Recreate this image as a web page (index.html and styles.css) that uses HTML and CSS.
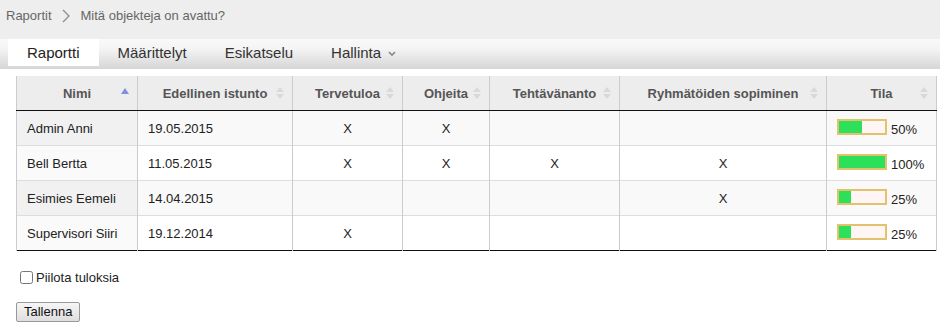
FILE: index.html
```html
<!DOCTYPE html>
<html>
<head>
    <title>Mitä objekteja on avattu?</title>
    <link rel="stylesheet" href="styles.css">
</head>
<body>
    <div class="breadcrumb">
        <a href="#">Raportit</a>
        <svg class="crumb-sep" width="8" height="14" viewBox="0 0 8 14"><path d="M1 1 L7 7 L1 13" fill="none" stroke="#888" stroke-width="1.2"/></svg>
        <span>Mitä objekteja on avattu?</span>
    </div>
    <div class="tabs">
        <a class="tab active" href="#">Raportti</a>
        <a class="tab" href="#">Määrittelyt</a>
        <a class="tab" href="#">Esikatselu</a>
        <a class="tab" href="#">Hallinta <svg class="caret" width="8" height="6" viewBox="0 0 8 6"><path d="M1 1 L4 4 L7 1" fill="none" stroke="#888" stroke-width="1.6"/></svg></a>
    </div>

    <div class="content">
        <table class="report">
            <colgroup>
                <col style="width:121px"><col style="width:155px"><col style="width:110px"><col style="width:87px"><col style="width:130px"><col style="width:207px"><col style="width:110px">
            </colgroup>
            <thead>
                <tr>
                    <th class="sort-asc">Nimi</th>
                    <th class="sortable">Edellinen istunto</th>
                    <th class="sortable">Tervetuloa</th>
                    <th class="sortable">Ohjeita</th>
                    <th class="sortable">Tehtävänanto</th>
                    <th class="sortable">Ryhmätöiden sopiminen</th>
                    <th class="sortable">Tila</th>
                </tr>
            </thead>
            <tbody>
                <tr>
                    <td class="name">Admin Anni</td>
                    <td>19.05.2015</td>
                    <td class="mark">X</td>
                    <td class="mark">X</td>
                    <td class="mark"></td>
                    <td class="mark"></td>
                    <td><span class="bar"><span class="fill" style="width:50%"></span></span>50%</td>
                </tr>
                <tr>
                    <td class="name">Bell Bertta</td>
                    <td>11.05.2015</td>
                    <td class="mark">X</td>
                    <td class="mark">X</td>
                    <td class="mark">X</td>
                    <td class="mark">X</td>
                    <td><span class="bar"><span class="fill" style="width:100%"></span></span>100%</td>
                </tr>
                <tr>
                    <td class="name">Esimies Eemeli</td>
                    <td>14.04.2015</td>
                    <td class="mark"></td>
                    <td class="mark"></td>
                    <td class="mark"></td>
                    <td class="mark">X</td>
                    <td><span class="bar"><span class="fill" style="width:25%"></span></span>25%</td>
                </tr>
                <tr>
                    <td class="name">Supervisori Siiri</td>
                    <td>19.12.2014</td>
                    <td class="mark">X</td>
                    <td class="mark"></td>
                    <td class="mark"></td>
                    <td class="mark"></td>
                    <td><span class="bar"><span class="fill" style="width:25%"></span></span>25%</td>
                </tr>
            </tbody>
        </table>

        <label class="hide-results"><input type="checkbox"> Piilota tuloksia</label>
        <button class="save">Tallenna</button>
    </div>
</body>
</html>
```

FILE: styles.css
```css
body {
    margin: 0;
    font-family: "Liberation Sans", Arial, sans-serif;
    font-size: 13px;
    color: #222;
    background: #fff;
}
.breadcrumb {
    background: #eeeeee;
    height: 39px;
    display: flex;
    align-items: center;
    padding: 0 0 8px 6px;
    box-sizing: border-box;
    color: #666;
    font-size: 13px;
}
.breadcrumb a {
    color: #666;
    text-decoration: none;
}
.crumb-sep {
    margin: 0 11px 0 10px;
}
.tabs {
    height: 30px;
    display: flex;
    padding-left: 8px;
    background: linear-gradient(#f9f9f9, #f5f5f5 30%, #d6d6d6);
}
.tab {
    padding: 0 19px;
    height: 27px;
    line-height: 27px;
    font-size: 15px;
    color: #333;
    text-decoration: none;
}
.tab.active {
    background: #fff;
    color: #222;
}
.caret {
    margin-left: 3px;
    vertical-align: 1px;
}
.content {
    padding: 7px 16px 0 16px;
}
.report {
    border-collapse: collapse;
    width: 920px;
    table-layout: fixed;
    border-bottom: 1px solid #111;
}
.report th {
    position: relative;
    height: 34px;
    padding: 0 18px;
    background: #ededed;
    color: #555;
    font-weight: bold;
    font-size: 13px;
    border-left: 1px solid #ccc;
    border-right: 1px solid #ccc;
    border-bottom: 1px solid #111;
    white-space: nowrap;
}
/* sort arrows */
.report th.sortable::before,
.report th.sortable::after,
.report th.sort-asc::after {
    content: "";
    position: absolute;
    right: 8px;
    width: 0;
    height: 0;
    border-left: 4px solid transparent;
    border-right: 4px solid transparent;
}
.report th.sortable::before {
    top: 11px;
    border-bottom: 5px solid #d9d9d9;
}
.report th.sortable::after {
    top: 18px;
    border-top: 5px solid #d9d9d9;
}
.report th.sort-asc::after {
    top: 12px;
    border-bottom: 6px solid #7f8fe4;
}
.report td {
    height: 34px;
    padding: 0 10px;
    border-left: 1px solid #ccc;
    border-right: 1px solid #ccc;
    border-top: 1px solid #ddd;
    white-space: nowrap;
}
.report tbody tr:nth-child(odd) td {
    background: #f9f9f9;
}
.report tbody tr:nth-child(odd) td.name {
    background: #f1f1f1;
}
.report tbody tr:nth-child(even) td.name {
    background: #fafafa;
}
.report td.mark {
    text-align: center;
}
.bar {
    display: inline-block;
    width: 46px;
    height: 12px;
    border: 2px solid #e2c26c;
    background: #fff5f5;
    margin-right: 4px;
    vertical-align: -1px;
}
.fill {
    display: block;
    height: 100%;
    background: #2ce05a;
}
.hide-results {
    display: flex;
    align-items: center;
    margin: 19px 0 0 3px;
    font-size: 13px;
}
.hide-results input {
    margin: 0 3px 0 1px;
    width: 13px;
    height: 13px;
}
.save {
    display: block;
    margin-top: 17px;
    font-family: "Liberation Sans", Arial, sans-serif;
    font-size: 13px;
    padding: 1px 7px;
    height: 20px;
    line-height: 16px;
    border: 1px solid #999;
    border-radius: 2px;
    background: linear-gradient(#f6f6f6, #dedede);
    color: #111;
}
```
